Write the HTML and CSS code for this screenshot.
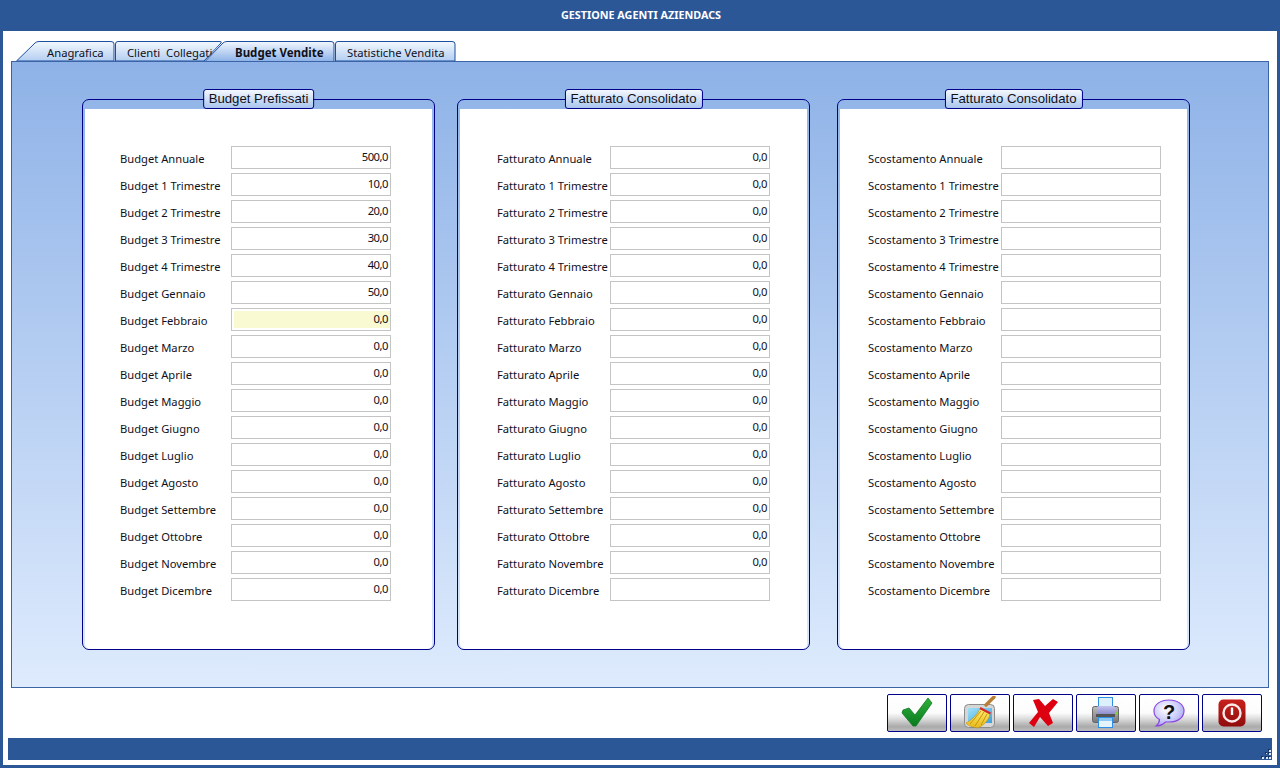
FILE: index.html
```html
<!DOCTYPE html>
<html lang="it">
<head>
<meta charset="utf-8">
<title>Gestione Agenti Aziendacs</title>
<link rel="stylesheet" href="styles.css">
</head>
<body>
<div class="window">
  <header class="titlebar">GESTIONE AGENTI AZIENDACS</header>
  <nav class="tabs">
    <div class="tab tab-a"><svg class="tab-shape" width="99" height="20"><defs><linearGradient id="tg" x1="0" y1="0" x2="0" y2="1"><stop offset="0" stop-color="#f3f8fe"/><stop offset="1" stop-color="#b4cef1"/></linearGradient><linearGradient id="ta" x1="0" y1="0" x2="0" y2="1"><stop offset="0" stop-color="#f3f8fe"/><stop offset="1" stop-color="#8fb3e8"/></linearGradient></defs><path d="M.5 20 19 2Q20.5.5 23 .5H95Q98 .5 98 3V20Z" fill="url(#tg)" stroke="#1d4f9f"/></svg><span class="tab-label">Anagrafica</span></div>
    <div class="tab tab-b"><svg class="tab-shape" width="108" height="20"><path d="M.5 20V3Q.5 .5 3 .5H105Q107 .5 106 2L89 20Z" fill="url(#tg)" stroke="#1d4f9f"/></svg><span class="tab-label">Clienti  Collegati</span></div>
    <div class="tab tab-c"><svg class="tab-shape" width="130" height="20"><path d="M.5 20 18 2Q19.5 .5 22 .5H126Q129 .5 129 3V20Z" fill="url(#ta)"/><path d="M.5 20 18 2Q19.5 .5 22 .5H126Q129 .5 129 3V20" fill="none" stroke="#1d4f9f"/></svg><span class="tab-label">Budget Vendite</span></div>
    <div class="tab tab-d"><svg class="tab-shape" width="121" height="20"><path d="M.5 20V3Q.5 .5 3 .5H117Q120 .5 120 3V20Z" fill="url(#tg)" stroke="#1d4f9f"/></svg><span class="tab-label">Statistiche Vendita</span></div>
  </nav>
  <main class="panel">
    <section class="group group-budget">
      <h2 class="legend">Budget Prefissati</h2>
      <div class="sheet">
        <div class="row"><span class="label">Budget Annuale</span><div class="field">500,0</div></div>
        <div class="row"><span class="label">Budget 1 Trimestre</span><div class="field">10,0</div></div>
        <div class="row"><span class="label">Budget 2 Trimestre</span><div class="field">20,0</div></div>
        <div class="row"><span class="label">Budget 3 Trimestre</span><div class="field">30,0</div></div>
        <div class="row"><span class="label">Budget 4 Trimestre</span><div class="field">40,0</div></div>
        <div class="row"><span class="label">Budget Gennaio</span><div class="field">50,0</div></div>
        <div class="row"><span class="label">Budget Febbraio</span><div class="field field-focus">0,0</div></div>
        <div class="row"><span class="label">Budget Marzo</span><div class="field">0,0</div></div>
        <div class="row"><span class="label">Budget Aprile</span><div class="field">0,0</div></div>
        <div class="row"><span class="label">Budget Maggio</span><div class="field">0,0</div></div>
        <div class="row"><span class="label">Budget Giugno</span><div class="field">0,0</div></div>
        <div class="row"><span class="label">Budget Luglio</span><div class="field">0,0</div></div>
        <div class="row"><span class="label">Budget Agosto</span><div class="field">0,0</div></div>
        <div class="row"><span class="label">Budget Settembre</span><div class="field">0,0</div></div>
        <div class="row"><span class="label">Budget Ottobre</span><div class="field">0,0</div></div>
        <div class="row"><span class="label">Budget Novembre</span><div class="field">0,0</div></div>
        <div class="row"><span class="label">Budget Dicembre</span><div class="field">0,0</div></div>
      </div>
    </section>
    <section class="group group-fatturato">
      <h2 class="legend">Fatturato Consolidato</h2>
      <div class="sheet">
        <div class="row"><span class="label">Fatturato Annuale</span><div class="field">0,0</div></div>
        <div class="row"><span class="label">Fatturato 1 Trimestre</span><div class="field">0,0</div></div>
        <div class="row"><span class="label">Fatturato 2 Trimestre</span><div class="field">0,0</div></div>
        <div class="row"><span class="label">Fatturato 3 Trimestre</span><div class="field">0,0</div></div>
        <div class="row"><span class="label">Fatturato 4 Trimestre</span><div class="field">0,0</div></div>
        <div class="row"><span class="label">Fatturato Gennaio</span><div class="field">0,0</div></div>
        <div class="row"><span class="label">Fatturato Febbraio</span><div class="field">0,0</div></div>
        <div class="row"><span class="label">Fatturato Marzo</span><div class="field">0,0</div></div>
        <div class="row"><span class="label">Fatturato Aprile</span><div class="field">0,0</div></div>
        <div class="row"><span class="label">Fatturato Maggio</span><div class="field">0,0</div></div>
        <div class="row"><span class="label">Fatturato Giugno</span><div class="field">0,0</div></div>
        <div class="row"><span class="label">Fatturato Luglio</span><div class="field">0,0</div></div>
        <div class="row"><span class="label">Fatturato Agosto</span><div class="field">0,0</div></div>
        <div class="row"><span class="label">Fatturato Settembre</span><div class="field">0,0</div></div>
        <div class="row"><span class="label">Fatturato Ottobre</span><div class="field">0,0</div></div>
        <div class="row"><span class="label">Fatturato Novembre</span><div class="field">0,0</div></div>
        <div class="row"><span class="label">Fatturato Dicembre</span><div class="field"></div></div>
      </div>
    </section>
    <section class="group group-scostamento">
      <h2 class="legend">Fatturato Consolidato</h2>
      <div class="sheet">
        <div class="row"><span class="label">Scostamento Annuale</span><div class="field"></div></div>
        <div class="row"><span class="label">Scostamento 1 Trimestre</span><div class="field"></div></div>
        <div class="row"><span class="label">Scostamento 2 Trimestre</span><div class="field"></div></div>
        <div class="row"><span class="label">Scostamento 3 Trimestre</span><div class="field"></div></div>
        <div class="row"><span class="label">Scostamento 4 Trimestre</span><div class="field"></div></div>
        <div class="row"><span class="label">Scostamento Gennaio</span><div class="field"></div></div>
        <div class="row"><span class="label">Scostamento Febbraio</span><div class="field"></div></div>
        <div class="row"><span class="label">Scostamento Marzo</span><div class="field"></div></div>
        <div class="row"><span class="label">Scostamento Aprile</span><div class="field"></div></div>
        <div class="row"><span class="label">Scostamento Maggio</span><div class="field"></div></div>
        <div class="row"><span class="label">Scostamento Giugno</span><div class="field"></div></div>
        <div class="row"><span class="label">Scostamento Luglio</span><div class="field"></div></div>
        <div class="row"><span class="label">Scostamento Agosto</span><div class="field"></div></div>
        <div class="row"><span class="label">Scostamento Settembre</span><div class="field"></div></div>
        <div class="row"><span class="label">Scostamento Ottobre</span><div class="field"></div></div>
        <div class="row"><span class="label">Scostamento Novembre</span><div class="field"></div></div>
        <div class="row"><span class="label">Scostamento Dicembre</span><div class="field"></div></div>
      </div>
    </section>
  </main>
  <div class="toolbar">
    <button class="tool" aria-label="Conferma"><svg width="34" height="32" viewBox="0 0 34 32"><defs><linearGradient id="gc" x1="0" y1="0" x2="0" y2="1"><stop offset="0" stop-color="#2fb03a"/><stop offset="1" stop-color="#0a7a1e"/></linearGradient></defs><path d="M3 13 9 11 15 18 28 1 32 6 16 29H13L2 16Z" fill="url(#gc)" stroke="#0f7a25" stroke-width=".8" stroke-linejoin="round"/></svg></button>
    <button class="tool" aria-label="Pulisci"><svg width="34" height="34" viewBox="0 0 34 34"><defs><linearGradient id="gs" x1="0" y1="0" x2="1" y2="1"><stop offset="0" stop-color="#9fe2f7"/><stop offset="1" stop-color="#3a9fe0"/></linearGradient><linearGradient id="gb" x1="0" y1="0" x2="0" y2="1"><stop offset="0" stop-color="#ffec70"/><stop offset="1" stop-color="#e8b818"/></linearGradient></defs><rect x="1.500" y="8.500" width="30" height="23" rx="4" fill="#d6d6d6" stroke="#8c8c8c"/><rect x="5" y="12" width="24" height="15" fill="url(#gs)"/><path d="M23 9 31 1" stroke="#b97d33" stroke-width="3.400" stroke-linecap="round"/><path d="M17 13 27 18C26 24 21 29 15 32 10 31 5 30 3 27 9 24 14 19 17 13Z" fill="url(#gb)" stroke="#b98d12" stroke-width=".6"/><path d="M18 15 7 28M21 16 12 30M24 18 18 29" stroke="#c6960f" fill="none"/><path d="M17.500 11 28 16.500 27 18.500 16.500 13Z" fill="#d8282a"/></svg></button>
    <button class="tool" aria-label="Annulla"><svg width="32" height="32" viewBox="0 0 32 32"><path d="M6 3 12 2 18 9 26 2 31 5 22 16 26 26 21 29 13 20 7 30 2 26 11 15Z" fill="#dd0010"/></svg></button>
    <button class="tool" aria-label="Stampa"><svg width="30" height="32" viewBox="0 0 30 32"><defs><linearGradient id="gp" x1="0" y1="0" x2="0" y2="1"><stop offset="0" stop-color="#c4c4f2"/><stop offset="1" stop-color="#8d8dcc"/></linearGradient><linearGradient id="gd" x1="0" y1="0" x2="0" y2="1"><stop offset="0" stop-color="#bdbdbd"/><stop offset="1" stop-color="#777"/></linearGradient></defs><rect x="7.500" y=".5" width="14" height="11" fill="#dcf0fb" stroke="#2f8fe6"/><rect x="1.500" y="9.500" width="26" height="16" rx="2" fill="url(#gd)" stroke="#666"/><rect x="6" y="9" width="18" height="8" rx="2" fill="url(#gp)"/><rect x="5" y="17" width="19" height="3" fill="#555"/><rect x="24.500" y="15" width="2.500" height="2.500" fill="#7fd43a"/><rect x="7.500" y="20.500" width="14" height="10" fill="#e4f3fc" stroke="#2f8fe6"/><rect x="8" y="21" width="13" height="3" fill="#8ec9f4"/></svg></button>
    <button class="tool" aria-label="Aiuto"><svg width="32" height="28" viewBox="0 0 32 28"><defs><radialGradient id="gh" cx=".4" cy=".35" r=".75"><stop offset="0" stop-color="#ffffff"/><stop offset=".6" stop-color="#c9c9fa"/><stop offset="1" stop-color="#9c9cf0"/></radialGradient></defs><path d="M16 1C8 1 1 5 1 12 1 16 3.500 19 6.500 20.500 6.500 23 5.500 25 3 27 7.500 27 10.500 25 12.500 23 13.500 23 15 23 16 23 24.500 23 31 18.500 31 12 31 5 24 1 16 1Z" fill="url(#gh)" stroke="#8a46e0" stroke-width="1.200"/><text class="help-mark" x="16" y="20" text-anchor="middle">?</text></svg></button>
    <button class="tool" aria-label="Esci"><svg width="28" height="28" viewBox="0 0 28 28"><defs><linearGradient id="gr" x1="0" y1="0" x2="0" y2="1"><stop offset="0" stop-color="#c8201c"/><stop offset="1" stop-color="#8f0d0c"/></linearGradient></defs><rect x=".5" y=".5" width="27" height="27" rx="5" fill="url(#gr)"/><circle cx="14" cy="14" r="8.500" fill="none" stroke="#fbeaea" stroke-width="2.400"/><rect x="12.800" y="8.500" width="2.400" height="7.500" fill="#fff"/></svg></button>
  </div>
  <footer class="statusbar"><svg class="grip" width="12" height="11"><path fill="#14315f" d="M8 0h2v2H8zM5 3h2v2H5zM8 3h2v2H8zM1 7h2v2H1zM5 7h2v2H5zM8 7h2v2H8z"/><path fill="#dfe8f5" d="M9 1h2v2H9zM9 4h2v2H9zM6 4h1v1H6zM2 8h2v2H2zM6 8h2v2H6zM9 8h2v2H9z"/></svg></footer>
</div>
</body>
</html>
```
FILE: styles.css
```css
* { box-sizing: border-box; }
html, body { margin: 0; padding: 0; }
body { width: 1280px; height: 768px; overflow: hidden; background: #fff; font-family: "Noto Sans", "Open Sans", sans-serif; font-size: 11.2px; color: #10101a; }

.window { width: 1280px; height: 768px; display: flex; flex-direction: column; background: #fff; border: 3px solid #2b5797; border-top: 0; }
.titlebar { height: 31px; flex: none; margin: 0 -3px; background: #2b5797; color: #fff; display: flex; align-items: center; justify-content: center; font-family: "Noto Sans", sans-serif; font-size: 10.8px; font-weight: 700; padding: 0 0 3px 2px; }

.tabs { display: flex; flex: none; height: 20px; margin: 10px 0 0 13px; }
.tab { position: relative; height: 20px; flex: none; font-size: 11.25px; }
.tab-shape { position: absolute; left: 0; top: 0; display: block; }
.tab-label { position: relative; display: block; line-height: 23px; white-space: pre; }
.tab-a { width: 99px; }
.tab-a .tab-label { padding-left: 31px; }
.tab-b { width: 108px; }
.tab-b .tab-label { padding-left: 12px; }
.tab-c { width: 130px; margin-left: -18px; z-index: 2; }
.tab-c .tab-label { padding-left: 30px; font-weight: 700; font-size: 11.5px; }
.tab-d { width: 121px; }
.tab-d .tab-label { padding-left: 12px; }

.panel { flex: none; height: 627px; margin: 0 8px; padding: 37px 0 0 70px; display: flex; align-items: flex-start; border: 1px solid #3a64a6; background: linear-gradient(#8eb2e7, #deebfd); }

.group { position: relative; flex: none; width: 353px; height: 551px; padding: 9px 2px 0; border: 1px solid #00008b; border-radius: 7px; }
.group-fatturato { margin-left: 22px; }
.group-scostamento { margin-left: 27px; }
.legend { position: absolute; top: -11px; left: 50%; transform: translateX(-50%); margin: 0; height: 20px; padding: 0 5px; border: 1px solid #00008b; border-radius: 3px; background: linear-gradient(#f4f8fe, #a9c5ee); font-family: "Liberation Sans", sans-serif; font-size: 13.2px; font-weight: 400; line-height: 18px; white-space: nowrap; color: #10101a; }
.sheet { height: 100%; padding-top: 37px; display: flex; flex-direction: column; gap: 4px; background: #fff; border-radius: 0 0 5px 5px; }
.group-budget .sheet { padding-left: 35px; }
.group-fatturato .sheet { padding-left: 37px; }
.group-scostamento .sheet { padding-left: 28px; }

.row { display: flex; align-items: flex-start; height: 23px; }
.label { flex: none; line-height: 25px; white-space: nowrap; }
.group-budget .label { width: 111px; }
.group-fatturato .label { width: 113px; }
.group-scostamento .label { width: 133px; }
.field { flex: none; width: 160px; height: 23px; padding-right: 2px; border: 1px solid #c4c4c4; background: #fff; font-size: 11.25px; line-height: 19px; text-align: right; letter-spacing: -.5px; }
.field-focus { background: #f9f9d2; box-shadow: inset 2px 2px 0 #fff, inset 0 -2px 0 #fff; }

.toolbar { flex: none; display: flex; justify-content: flex-end; gap: 3px; height: 38px; margin: 6px 15px 0 0; }
.tool { width: 60px; height: 38px; padding: 0; display: flex; align-items: center; justify-content: center; border: 1px solid #00008b; border-radius: 2px; background: linear-gradient(#fff 0, #fcfcfc 50%, #d8d8d8 68%, #aaa 88%, #bdbdbd 100%); }
.help-mark { font-family: "Liberation Sans", sans-serif; font-size: 20px; font-weight: 700; fill: #111; }

.statusbar { position: relative; flex: none; height: 22px; margin: 6px 5px 0; background: #2b5797; }
.grip { position: absolute; right: 0; bottom: 0; }
```
